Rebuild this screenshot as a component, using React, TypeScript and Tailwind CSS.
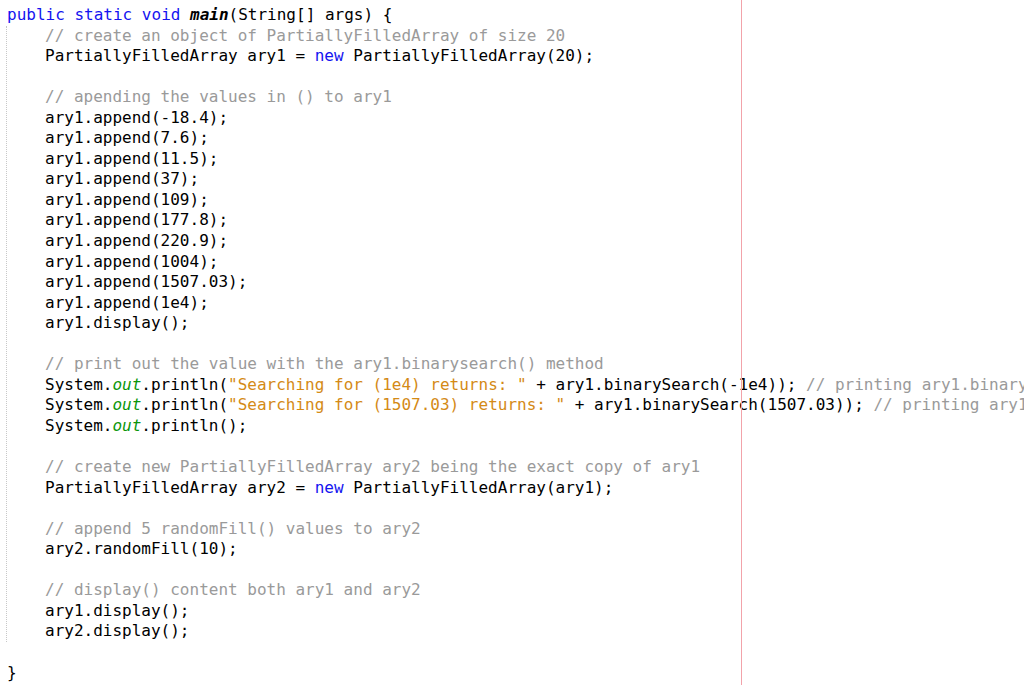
import React from 'react';

type Tok = [string, string?];

const K = 'text-[#1414f0]';
const C = 'text-[#9a9a9a]';
const S = 'text-[#d48a16]';
const O = 'text-[#0b960b] italic';

const body: Tok[][] = [
  [['// create an object of PartiallyFilledArray of size 20', C]],
  [['PartiallyFilledArray ary1 = '], ['new', K], [' PartiallyFilledArray(20);']],
  [],
  [['// apending the values in () to ary1', C]],
  [['ary1.append(-18.4);']],
  [['ary1.append(7.6);']],
  [['ary1.append(11.5);']],
  [['ary1.append(37);']],
  [['ary1.append(109);']],
  [['ary1.append(177.8);']],
  [['ary1.append(220.9);']],
  [['ary1.append(1004);']],
  [['ary1.append(1507.03);']],
  [['ary1.append(1e4);']],
  [['ary1.display();']],
  [],
  [['// print out the value with the ary1.binarysearch() method', C]],
  [
    ['System.'], ['out', O], ['.println('], ['"Searching for (1e4) returns: "', S],
    [' + ary1.binarySearch(-1e4)); '], ['// printing ary1.binarySearch(-1e4)', C],
  ],
  [
    ['System.'], ['out', O], ['.println('], ['"Searching for (1507.03) returns: "', S],
    [' + ary1.binarySearch(1507.03)); '], ['// printing ary1.binarySearch(1507.03)', C],
  ],
  [['System.'], ['out', O], ['.println();']],
  [],
  [['// create new PartiallyFilledArray ary2 being the exact copy of ary1', C]],
  [['PartiallyFilledArray ary2 = '], ['new', K], [' PartiallyFilledArray(ary1);']],
  [],
  [['// append 5 randomFill() values to ary2', C]],
  [['ary2.randomFill(10);']],
  [],
  [['// display() content both ary1 and ary2', C]],
  [['ary1.display();']],
  [['ary2.display();']],
];

function Line({ toks }: { toks: Tok[] }) {
  return (
    <div className="h-[20.56px] whitespace-pre">
      {toks.length === 0 ? ' ' : toks.map((t, i) => (
        <span key={i} className={t[1] ?? ''}>{t[0]}</span>
      ))}
    </div>
  );
}

export default function App() {
  return (
    <div
      className="relative h-[685px] w-[1024px] overflow-hidden bg-white text-[16px] leading-[20.56px] text-black"
      style={{ fontFamily: '"DejaVu Sans Mono", "Liberation Mono", monospace' }}
    >
      <div className="pl-[7px] pt-[5px]">
        <Line toks={[['public static void ', K], ['main', 'font-bold italic'], ['(String[] args) {']]} />
        <div className="ml-[-1px] border-l border-dotted border-[#c8c8c8] pl-[38px]">
          {body.map((l, i) => <Line key={i} toks={l} />)}
        </div>
        <Line toks={[]} />
        <Line toks={[['}']]} />
      </div>
      {/* margin guide */}
      <div className="absolute left-[741px] top-0 h-full w-px bg-[#f2a3aa]" />
    </div>
  );
}
